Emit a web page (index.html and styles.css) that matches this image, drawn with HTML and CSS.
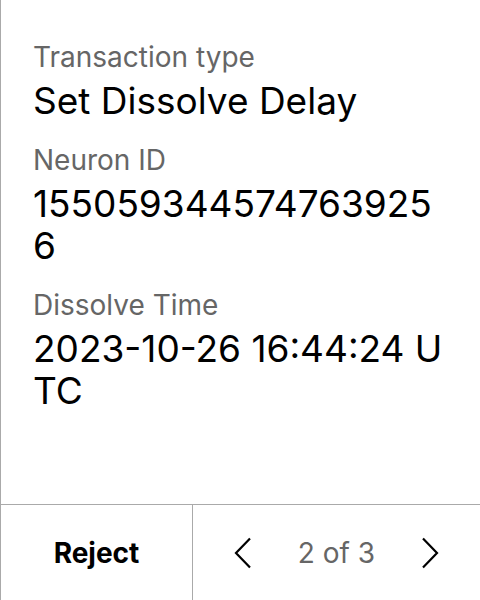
FILE: index.html
```html
<!DOCTYPE html>
<html lang="en">
<head>
<meta charset="utf-8">
<title>Transaction</title>
<link rel="stylesheet" href="styles.css">
</head>
<body>
<div class="screen">
  <main class="details">
    <div class="field">
      <div class="label">Transaction type</div>
      <div class="value">Set Dissolve Delay</div>
    </div>
    <div class="field">
      <div class="label">Neuron ID</div>
      <div class="value">1550593445747639256</div>
    </div>
    <div class="field">
      <div class="label">Dissolve Time</div>
      <div class="value">2023-10-26 16:44:24 UTC</div>
    </div>
  </main>
  <footer class="actions">
    <div class="reject">Reject</div>
    <div class="pager">
      <svg class="chev" width="18" height="32" viewBox="0 0 18 32"><path d="M16 1.5 L2 16 L16 30.5" fill="none" stroke="#000" stroke-width="2.2"/></svg>
      <span class="count">2 of 3</span>
      <svg class="chev" width="18" height="32" viewBox="0 0 18 32"><path d="M2 1.5 L16 16 L2 30.5" fill="none" stroke="#000" stroke-width="2.2"/></svg>
    </div>
  </footer>
</div>
</body>
</html>
```
FILE: styles.css
```css
* { box-sizing: border-box; }
html, body { margin: 0; padding: 0; background: #fff; }
body { font-family: Inter, "Noto Sans", sans-serif; color: #000; }
.screen {
  width: 480px;
  height: 600px;
  border-left: 1px solid #aaaaaa;
  display: flex;
  flex-direction: column;
}
.details {
  flex: 1;
  padding: 40px 32px 0 32px;
  display: flex;
  flex-direction: column;
  gap: 21px;
}
.label {
  font-size: 28px;
  line-height: 34px;
  color: #666666;
}
.value {
  font-size: 37px;
  line-height: 42px;
  word-break: break-all;
  margin-top: 6px;
}
.actions {
  height: 96px;
  border-top: 1px solid #aaaaaa;
  display: flex;
}
.reject {
  width: 192px;
  border-right: 1px solid #aaaaaa;
  display: flex;
  align-items: center;
  justify-content: center;
  font-size: 28px;
  font-weight: 700;
}
.pager {
  flex: 1;
  display: flex;
  align-items: center;
  justify-content: space-between;
  padding: 0 41px 0 41px;
}
.count {
  font-size: 28px;
  color: #666666;
}
.chev { display: block; }
```
